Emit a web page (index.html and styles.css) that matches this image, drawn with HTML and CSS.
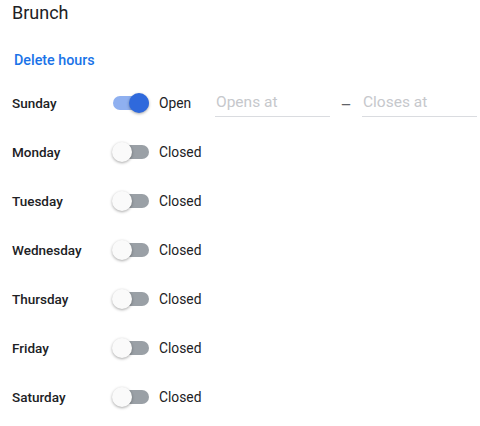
FILE: index.html
```html
<!DOCTYPE html>
<html lang="en">

<head>
    <meta charset="UTF-8">
    <meta name="viewport" content="width=device-width, initial-scale=1.0">
    <title>Brunch</title>
    <link rel="stylesheet" href="styles.css">
</head>

<body>
    <div class="panel">
        <h1 class="title">Brunch</h1>
        <a class="delete" href="#">Delete hours</a>

        <div class="days">
            <div class="day">
                <span class="day-name">Sunday</span>
                <span class="switch on"><span class="track"></span><span class="thumb"></span></span>
                <span class="state">Open</span>
                <div class="times">
                    <input class="time" type="text" placeholder="Opens at">
                    <span class="dash">–</span>
                    <input class="time" type="text" placeholder="Closes at">
                </div>
            </div>
            <div class="day">
                <span class="day-name">Monday</span>
                <span class="switch"><span class="track"></span><span class="thumb"></span></span>
                <span class="state">Closed</span>
            </div>
            <div class="day">
                <span class="day-name">Tuesday</span>
                <span class="switch"><span class="track"></span><span class="thumb"></span></span>
                <span class="state">Closed</span>
            </div>
            <div class="day">
                <span class="day-name">Wednesday</span>
                <span class="switch"><span class="track"></span><span class="thumb"></span></span>
                <span class="state">Closed</span>
            </div>
            <div class="day">
                <span class="day-name">Thursday</span>
                <span class="switch"><span class="track"></span><span class="thumb"></span></span>
                <span class="state">Closed</span>
            </div>
            <div class="day">
                <span class="day-name">Friday</span>
                <span class="switch"><span class="track"></span><span class="thumb"></span></span>
                <span class="state">Closed</span>
            </div>
            <div class="day">
                <span class="day-name">Saturday</span>
                <span class="switch"><span class="track"></span><span class="thumb"></span></span>
                <span class="state">Closed</span>
            </div>
        </div>
    </div>
</body>

</html>
```

FILE: styles.css
```css
body {
    margin: 0;
    background: #fff;
    font-family: Roboto, "Liberation Sans", sans-serif;
    color: #202124;
}

.panel {
    padding: 0 0 0 12px;
}

.title {
    margin: 0;
    font-size: 18px;
    line-height: 26px;
    font-weight: 400;
}

.delete {
    display: block;
    margin-top: 24px;
    margin-left: 2px;
    width: max-content;
    font-size: 14.3px;
    line-height: 20px;
    font-weight: 500;
    color: #1a73e8;
    text-decoration: none;
}

.days {
    margin-top: 8px;
}

.day {
    display: flex;
    align-items: center;
    height: 49px;
}

.day-name {
    width: 100px;
    font-size: 13.5px;
    font-weight: 500;
}

.switch {
    position: relative;
    width: 37px;
    height: 20px;
    flex-shrink: 0;
}

.switch .track {
    position: absolute;
    left: 1px;
    right: 0;
    top: 3px;
    height: 14px;
    border-radius: 7px;
    background: #9aa0a6;
}

.switch .thumb {
    position: absolute;
    left: 0;
    top: 0;
    width: 20px;
    height: 20px;
    border-radius: 50%;
    background: #fafafa;
    box-shadow: 0 1px 3px rgba(0, 0, 0, 0.35);
}

.switch.on .track {
    background: #8fb0f0;
}

.switch.on .thumb {
    left: auto;
    right: 0;
    background: #2f69dc;
}

.state {
    width: 56px;
    margin-left: 10px;
    font-size: 13.8px;
}

.times {
    display: flex;
    align-items: center;
}

.time {
    width: 115px;
    height: 30px;
    padding: 0 1px;
    border: none;
    border-bottom: 1px solid #dadce0;
    font-family: inherit;
    font-size: 15.5px;
    color: #202124;
    outline: none;
    box-sizing: border-box;
    margin-top: -1px;
}

.time::placeholder {
    color: #c6c8cc;
}

.dash {
    width: 32px;
    text-align: center;
    color: #5f6368;
    font-size: 17px;
    margin-top: 4px;
}
```
